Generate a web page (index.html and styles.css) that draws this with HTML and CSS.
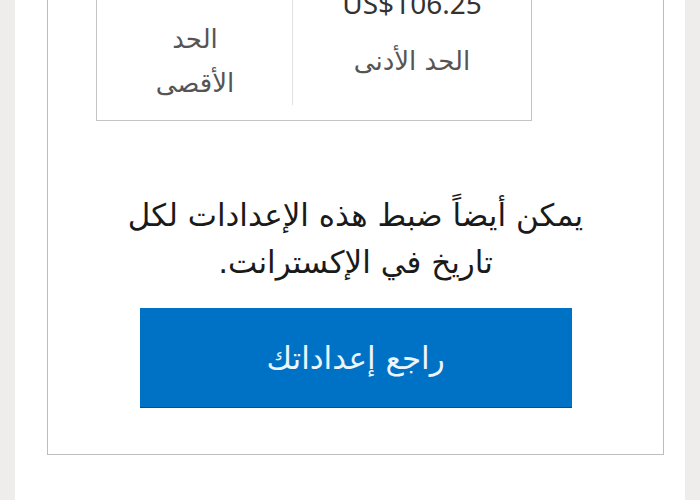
FILE: index.html
```html
<!DOCTYPE html>
<html lang="ar" dir="rtl">
<head>
<meta charset="utf-8">
<title>الإعدادات</title>
<link rel="stylesheet" href="styles.css">
</head>
<body>
<div class="column">
  <section class="card">
    <div class="limits">
      <div class="cell cell-min">
        <div class="value">US$106.25</div>
        <div class="label label-min">الحد الأدنى</div>
      </div>
      <div class="cell cell-max">
        <div class="label label-max">الحد<br>الأقصى</div>
      </div>
    </div>
    <p class="note">يمكن أيضاً ضبط هذه الإعدادات لكل<br>تاريخ في الإكسترانت.</p>
    <a class="review-btn" href="#">راجع إعداداتك</a>
  </section>
</div>
</body>
</html>
```

FILE: styles.css
```css
html, body {
  margin: 0;
  padding: 0;
}

body {
  background: #efedeb;
  font-family: "DejaVu Sans", "Noto Sans", sans-serif;
  height: 500px;
  overflow: hidden;
}

.column {
  margin: 0 15px;
  background: #ffffff;
  min-height: 500px;
  padding-top: 1px;
  box-sizing: border-box;
}

.card {
  margin: -61px 21px 0 32px;
  border: 1px solid #bdbdbd;
  padding: 19px 0 47px;
  background: #ffffff;
}

.limits {
  direction: rtl;
  display: grid;
  grid-template-columns: 239px 194px;
  width: 436px;
  box-sizing: border-box;
  margin-right: 131px;
  border: 1px solid #c4c4c4;
  padding-bottom: 15px;
}

.cell {
  text-align: center;
}

.cell-min {
  border-left: 1px solid #e2e2e2;
  padding-top: 24px;
}

.cell-max {
  padding-top: 56px;
}

.value {
  font-family: "Noto Sans", "Open Sans", sans-serif;
  direction: ltr;
  font-size: 28px;
  line-height: 40px;
  color: #333333;
  margin-top: -2px;
  margin-bottom: 2px;
}

.label {
  color: #555555;
  font-size: 26px;
}

.label-min {
  line-height: 46px;
  margin-top: 15px;
}

.label-max {
  line-height: 44px;
}

.note {
  margin: 71px 0 0;
  text-align: center;
  font-size: 31px;
  line-height: 47px;
  color: #1a1a1a;
}

.review-btn {
  display: flex;
  align-items: center;
  justify-content: center;
  width: 432px;
  height: 99px;
  margin: 22px auto 0;
  background: #0072c6;
  color: #eef5fc;
  font-size: 31px;
  text-decoration: none;
  box-shadow: 0 1px 0 #0a4f86;
}
```
